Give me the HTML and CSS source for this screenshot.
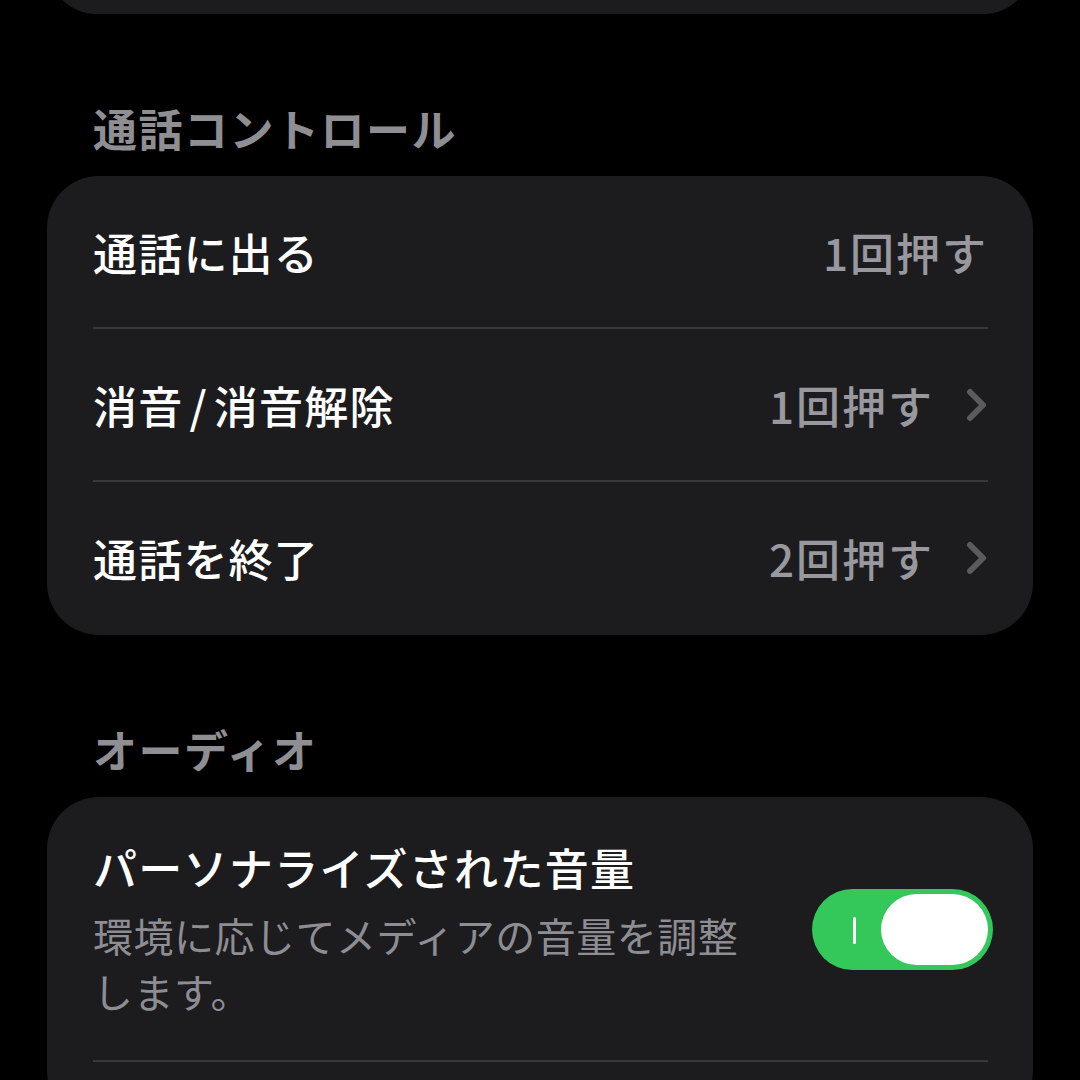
FILE: index.html
```html
<!DOCTYPE html>
<html lang="ja">
<head>
    <meta charset="UTF-8">
    <title>通話コントロール</title>
    <link rel="stylesheet" href="styles.css">
</head>
<body>
    <div class="page">
        <div class="card card-prev"></div>

        <h2 class="section-title">通話コントロール</h2>
        <div class="card card-list">
            <div class="row">
                <span class="row-label">通話に出る</span>
                <span class="row-value">1回押す</span>
            </div>
            <div class="row">
                <span class="row-label">消音<span class="slash">/</span>消音解除</span>
                <span class="row-value">1回押す</span>
                <svg class="chevron" viewBox="0 0 22 34"><path d="M4 4 L17 17 L4 30"/></svg>
            </div>
            <div class="row">
                <span class="row-label">通話を終了</span>
                <span class="row-value">2回押す</span>
                <svg class="chevron" viewBox="0 0 22 34"><path d="M4 4 L17 17 L4 30"/></svg>
            </div>
        </div>

        <h2 class="section-title">オーディオ</h2>
        <div class="card">
            <div class="row row-toggle">
                <div class="row-text">
                    <div class="row-label">パーソナライズされた音量</div>
                    <div class="row-sub">環境に応じてメディアの音量を調整します。</div>
                </div>
                <div class="toggle on">
                    <span class="toggle-mark"></span>
                    <span class="toggle-knob"></span>
                </div>
            </div>
            <div class="row row-empty"></div>
        </div>
    </div>
</body>
</html>
```

FILE: styles.css
```css
html, body { margin: 0; padding: 0; background-color: #000; }
body { font-family: "Noto Sans CJK JP", "Noto Sans", sans-serif; color: #fff; }
.page { padding: 0 47px; overflow: hidden; height: 1080px; box-sizing: border-box; }

.card { background-color: #1c1c1e; border-radius: 52px; padding: 0 45px 0 46px; }
.card-prev { margin-top: -86px; height: 100px; }
.card-list { padding-bottom: 2px; }

.section-title { margin: 86px 0 20px 46px; font-size: 44px; line-height: 56px; font-weight: 700; color: #8e8e93; letter-spacing: 1.5px; }

.row { display: flex; align-items: center; height: 151px; border-bottom: 2px solid #38383a; }
.card .row:last-child { border-bottom: none; }
.row-label { flex: 1; font-size: 44px; font-weight: 500; line-height: 56px; letter-spacing: 1.2px; }
.slash { margin: 0 6px; }
.row-value { font-size: 44px; font-weight: 500; color: #98989e; letter-spacing: 2px; }
.chevron { width: 22px; height: 34px; margin-left: 32px; fill: none; stroke: #5a5a5f; stroke-width: 6; stroke-linecap: round; stroke-linejoin: round; }

.row-toggle { height: auto; padding: 42px 0 41px; align-items: center; }
.row-text { flex: 1; padding-right: 50px; }
.row-text .row-label { letter-spacing: 1.3px; }
.row-sub { font-size: 40px; line-height: 56px; color: #8d8d93; margin-top: 12px; letter-spacing: 0.5px; }

.toggle { position: relative; flex: none; width: 181px; height: 81px; border-radius: 41px; background-color: #34c759; margin-right: -5px; }
.toggle-mark { position: absolute; left: 41px; top: 28px; width: 3px; height: 27px; background-color: #fff; border-radius: 2px; }
.toggle-knob { position: absolute; right: 5px; top: 5px; width: 107px; height: 71px; border-radius: 36px; background-color: #fff; }

.row-empty { height: 60px; }
```
